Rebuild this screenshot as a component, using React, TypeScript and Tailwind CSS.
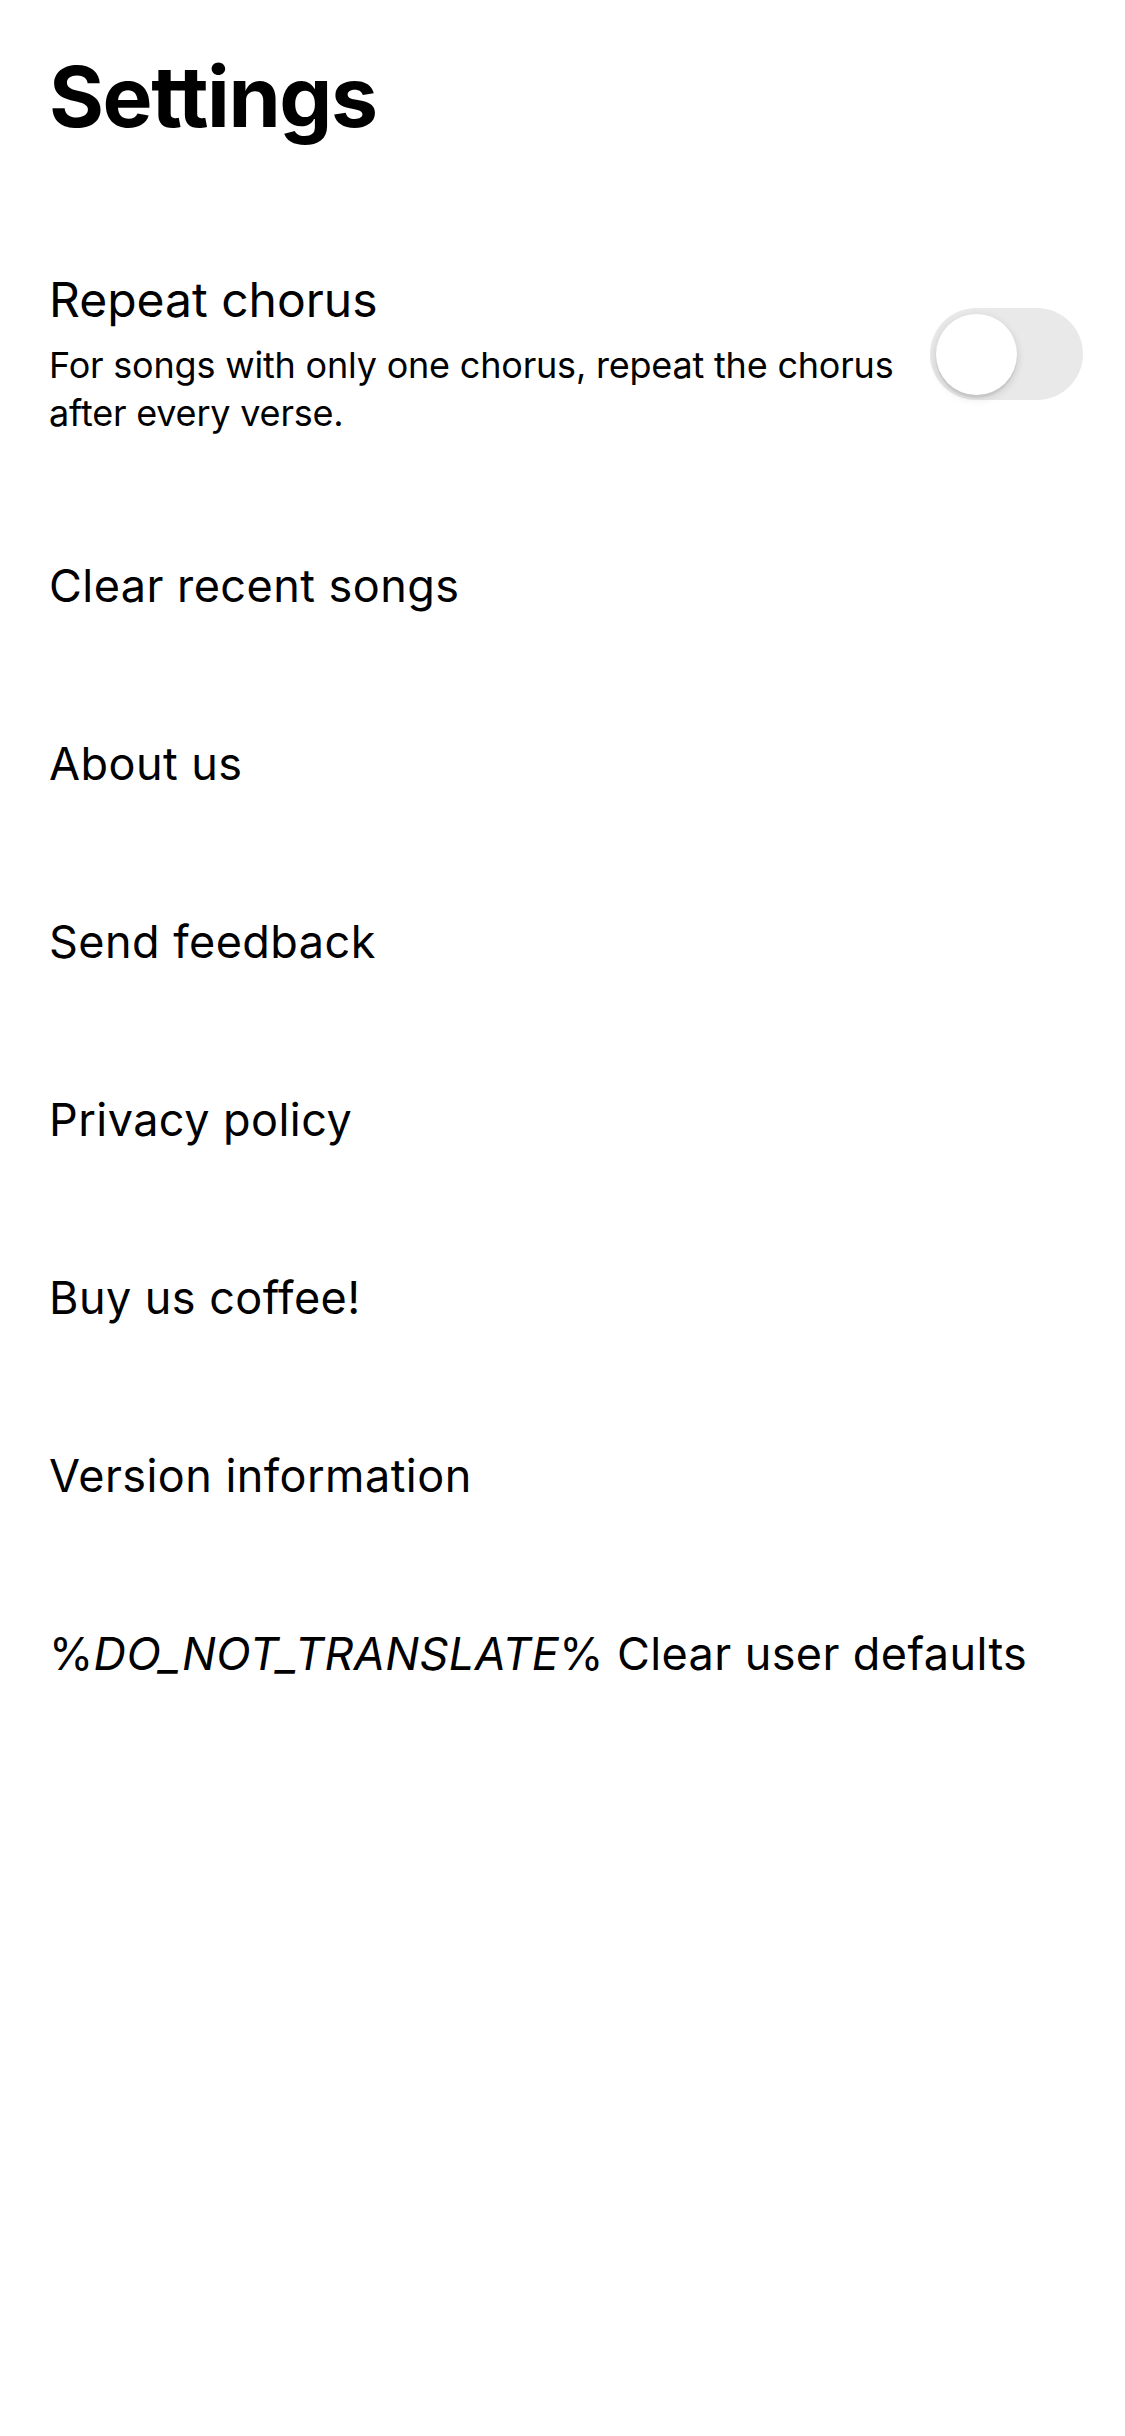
import React, { useState } from 'react';

const items = [
  'Clear recent songs',
  'About us',
  'Send feedback',
  'Privacy policy',
  'Buy us coffee!',
  'Version information',
];

function Toggle({ on, onChange }: { on: boolean; onChange: () => void }) {
  return (
    <button
      type="button"
      onClick={onChange}
      className={`relative shrink-0 w-[153px] h-[92px] rounded-full ${on ? 'bg-[#34c759]' : 'bg-[#e9e9ea]'}`}
    >
      <span
        className={`absolute top-[6px] w-[81px] h-[81px] rounded-full bg-white shadow-[0_3px_8px_rgba(0,0,0,0.15),0_3px_1px_rgba(0,0,0,0.06)] ${on ? 'left-[66px]' : 'left-[6px]'}`}
      />
    </button>
  );
}

export default function App() {
  const [repeat, setRepeat] = useState(false);

  return (
    <div className="min-h-[2436px] bg-white text-black font-['Inter','Liberation_Sans',sans-serif]">
      {/* Header */}
      <div className="pt-[55px] pl-[49px]">
        <h1 className="text-[84px] leading-[84px] font-bold tracking-[-1.4px]">Settings</h1>
      </div>

      {/* Repeat chorus */}
      <div className="mt-[132px] pl-[49px] pr-[42px] flex items-center gap-[20px]">
        <div className="flex-1">
          <div className="text-[48px] leading-[58px]">Repeat chorus</div>
          <p className="mt-[12px] text-[36px] leading-[48px] tracking-[-0.2px]">
            For songs with only one chorus, repeat the chorus after every verse.
          </p>
        </div>
        <Toggle on={repeat} onChange={() => setRepeat(!repeat)} />
      </div>

      {/* Rows */}
      <div className="mt-[59px]">
        {items.map((label) => (
          <div key={label} className="h-[178px] pt-[61px] pl-[49px] text-[45px] leading-[58px] tracking-[0.45px]">
            {label}
          </div>
        ))}
        <div className="h-[178px] pt-[61px] pl-[49px] text-[45px] leading-[58px] tracking-[0.4px]">
          %<span className="italic">DO_NOT_TRANSLATE</span>% Clear user defaults
        </div>
      </div>
    </div>
  );
}
